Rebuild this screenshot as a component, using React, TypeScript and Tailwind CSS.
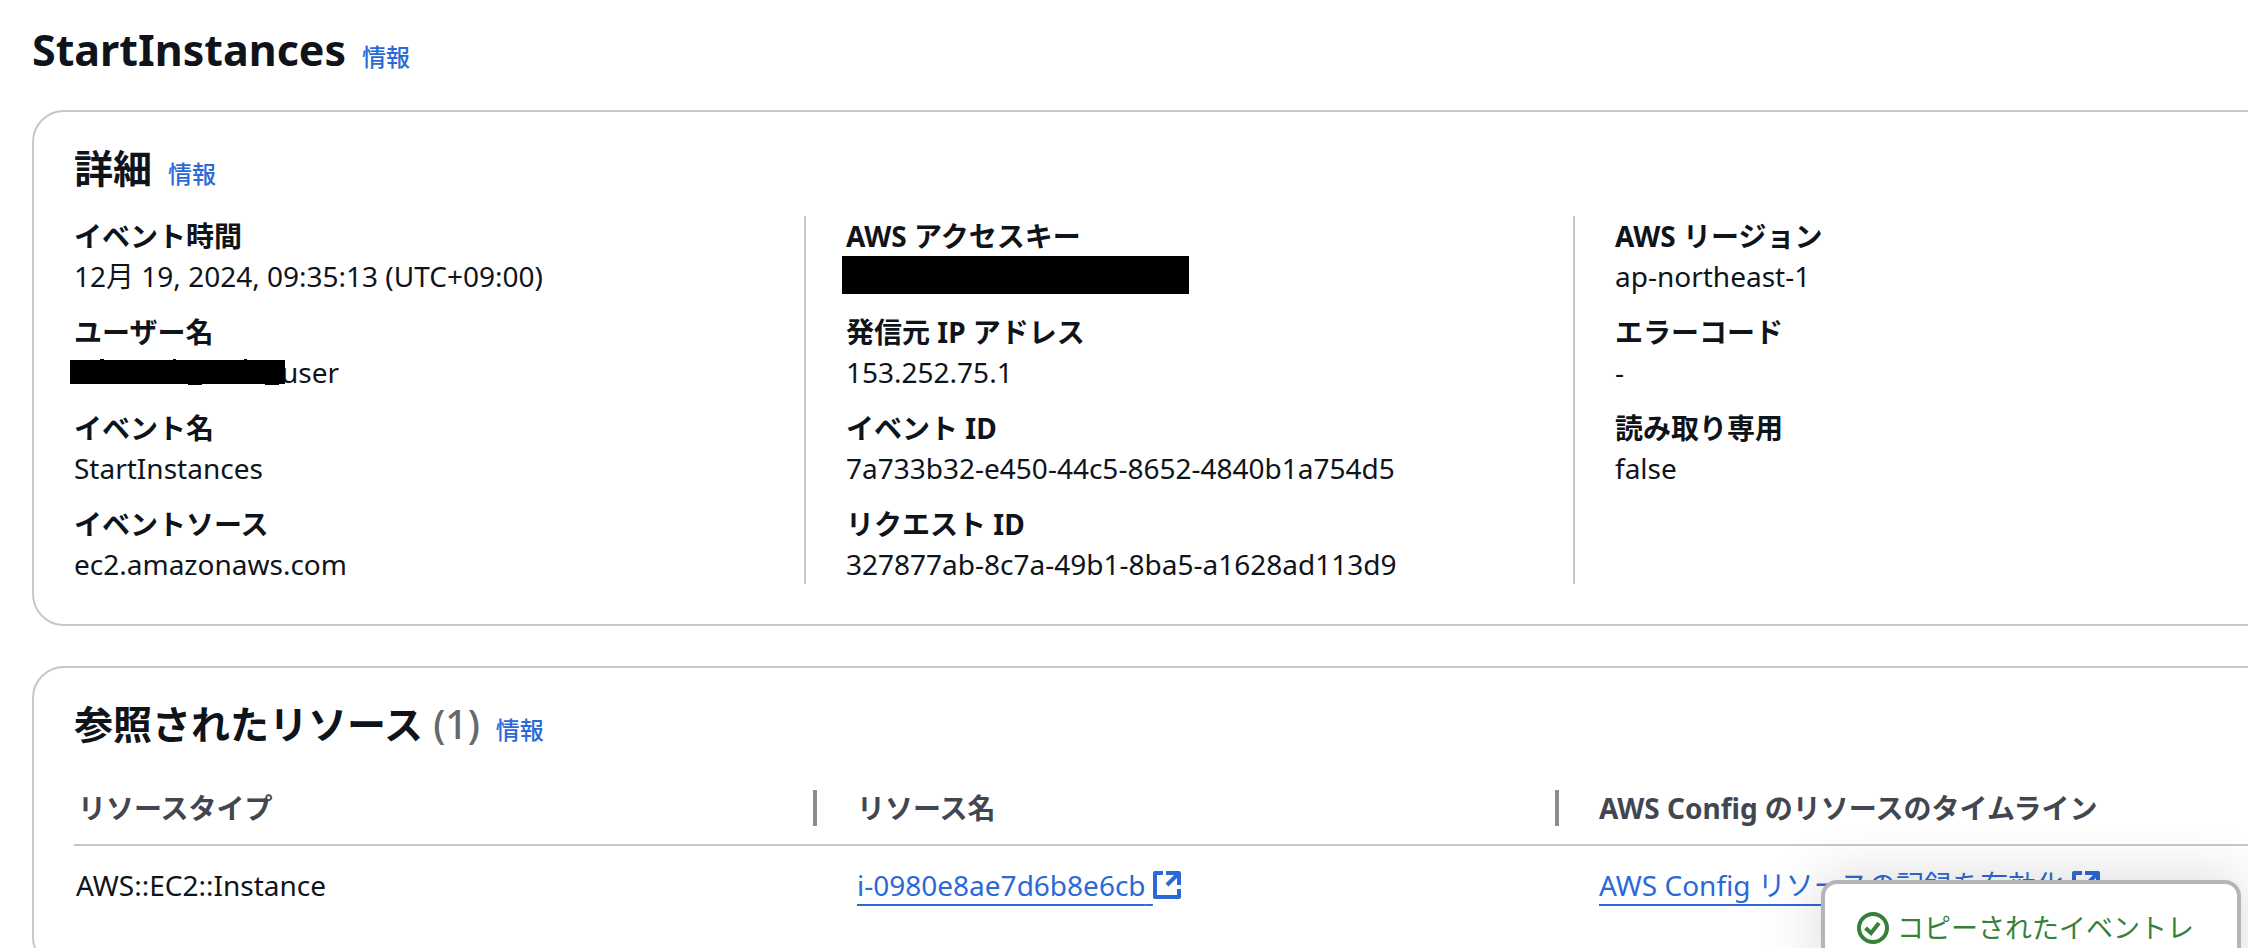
import React from "react";

type Field = { label: string; value: React.ReactNode };

function InfoLink() {
  return (
    <a href="#info" className="text-2xl font-medium text-[#2b69d9]">
      情報
    </a>
  );
}

function ExternalIcon() {
  return (
    <svg viewBox="0 0 28 28" className="inline-block h-7 w-7 align-[-3px]" fill="none" stroke="currentColor" strokeWidth="4" aria-hidden="true">
      <path d="M10 2H2v24h24V18M13 2h13v12M26 2L14 14" strokeLinejoin="round" />
    </svg>
  );
}

function CheckIcon() {
  return (
    <svg viewBox="0 0 32 32" className="h-8 w-8 shrink-0" fill="none" stroke="currentColor" strokeWidth="4" aria-hidden="true">
      <circle cx="16" cy="16" r="14" />
      <path d="M8.500 16l5.500 5 8-10" />
    </svg>
  );
}

function RedactedUser() {
  return (
    <span className="-ml-1 flex h-10 items-center">
      <svg viewBox="0 0 215 26" className="z-10 h-[26px] w-[215px] shrink-0" aria-hidden="true">
        <path d="M0 1H30V0H34V1H103V0H106V1H174V0H177V1H215V25H209V26H195V25H132V26H118V25H0Z" />
      </svg>
      <span className="-ml-1">user</span>
    </span>
  );
}

const columns: Field[][] = [
  [
    { label: "イベント時間", value: "12月 19, 2024, 09:35:13 (UTC+09:00)" },
    { label: "ユーザー名", value: <RedactedUser /> },
    { label: "イベント名", value: "StartInstances" },
    { label: "イベントソース", value: "ec2.amazonaws.com" },
  ],
  [
    { label: "AWS アクセスキー", value: <span className="-ml-1 block h-[38px] w-[347px] bg-black" /> },
    { label: "発信元 IP アドレス", value: "153.252.75.1" },
    { label: "イベント ID", value: "7a733b32-e450-44c5-8652-4840b1a754d5" },
    { label: "リクエスト ID", value: "327877ab-8c7a-49b1-8ba5-a1628ad113d9" },
  ],
  [
    { label: "AWS リージョン", value: "ap-northeast-1" },
    { label: "エラーコード", value: "-" },
    { label: "読み取り専用", value: "false" },
  ],
];

function Details() {
  return (
    <section className="rounded-4xl border-2 border-[#c6c6cd] px-10 pt-6 pb-10">
      <header className="flex h-20 items-baseline gap-4">
        <h2 className="text-[39px] leading-[64px] font-bold">詳細</h2>
        <InfoLink />
      </header>
      <div className="grid grid-cols-[730fr_769fr_769fr]">
        {columns.map((fields, i) => (
          <dl
            key={i}
            className={
              i === 0
                ? "flex flex-col gap-4"
                : "flex flex-col gap-4 border-l-2 border-[#c6c6cd] pl-10"
            }
          >
            {fields.map((f) => (
              <div key={f.label} className="leading-10">
                <dt className="h-10 font-bold">{f.label}</dt>
                <dd className="h-10">{f.value}</dd>
              </div>
            ))}
          </dl>
        ))}
      </div>
    </section>
  );
}

function ExternalLink({ children }: { children: React.ReactNode }) {
  return (
    <a href="#external" className="text-[#2b69d9]">
      <span className="whitespace-pre underline decoration-2 underline-offset-8">{children} </span>
      <ExternalIcon />
    </a>
  );
}

function Resources() {
  return (
    <section className="rounded-4xl border-2 border-[#c6c6cd] px-10 pt-6 pb-11">
      <header className="flex h-20 items-baseline gap-4">
        <h2 className="text-[39px] leading-[64px] font-bold">
          参照されたリソース <span className="font-medium text-[#656871]">(1)</span>
        </h2>
        <InfoLink />
      </header>
      <table className="w-full table-fixed border-collapse text-left leading-10">
        <colgroup>
          <col className="w-[743px]" />
          <col className="w-[742px]" />
          <col />
        </colgroup>
        <thead className="text-[#424650]">
          <tr className="h-[73px] border-b-2 border-[#c6c6cd]">
            <th className="p-0">
              <div className="flex h-9 items-center border-r-4 border-[#8c8c94] pl-1">リソースタイプ</div>
            </th>
            <th className="p-0">
              <div className="flex h-9 items-center border-r-4 border-[#8c8c94] pl-10">リソース名</div>
            </th>
            <th className="p-0 pl-10">AWS Config のリソースのタイムライン</th>
          </tr>
        </thead>
        <tbody>
          <tr className="h-[78px]">
            <td className="pl-0.5">AWS::EC2::Instance</td>
            <td className="pl-10">
              <ExternalLink>i-0980e8ae7d6b8e6cb</ExternalLink>
            </td>
            <td className="pl-10">
              <ExternalLink>AWS Config リソースの記録を有効化</ExternalLink>
            </td>
          </tr>
        </tbody>
      </table>
    </section>
  );
}

export default function App() {
  return (
    <div lang="ja" className="relative h-screen overflow-hidden bg-white font-['Noto_Sans','Noto_Sans_CJK_JP',sans-serif] text-[28px] text-[#0f141a]">
      <main className="-mr-[136px] flex flex-col gap-10 pl-8">
        <header className="flex h-[70px] items-baseline gap-4 pt-4">
          <h1 className="text-[43px] leading-[68px] font-bold">StartInstances</h1>
          <InfoLink />
        </header>
        <Details />
        <Resources />
      </main>
      <div
        role="status"
        className="absolute right-[7px] -bottom-7 flex h-24 w-[420px] items-center gap-2 rounded-2xl border-4 border-[#b4b4bb] bg-white pl-8 text-[27px] text-[#37803a] shadow-[0_0_60px_rgba(0,0,0,0.16)]"
      >
        <CheckIcon />
        <span className="whitespace-nowrap">コピーされたイベントレ</span>
      </div>
    </div>
  );
}
